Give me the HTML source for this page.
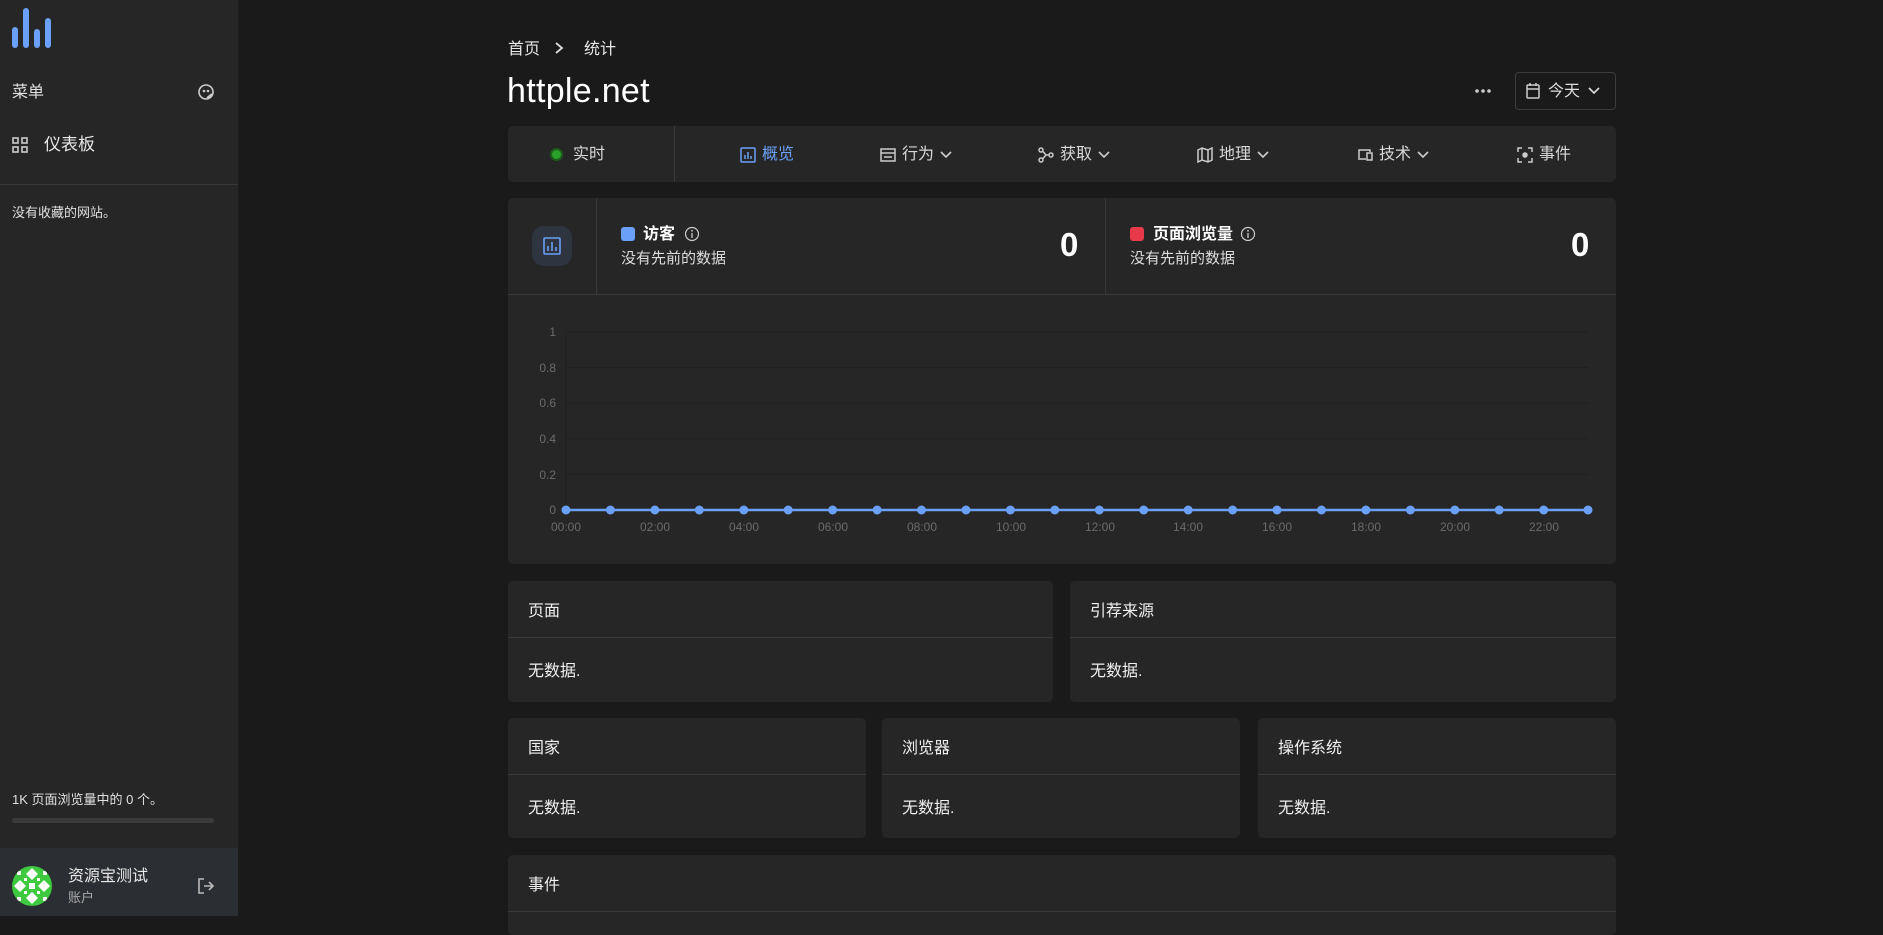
<!DOCTYPE html>
<html><head><meta charset="utf-8"><style>
*{box-sizing:border-box;margin:0;padding:0}
body{width:1883px;height:916px;overflow:hidden;background:#1a1a1a;color:#e8e8e8;font-family:"Liberation Sans","Noto Sans CJK SC",sans-serif;font-size:16px;position:relative;line-height:1.2}
.abs{position:absolute}
.side{left:0;top:0;width:238px;height:916px;background:#262626}
.card{background:#262626;border-radius:5px;position:absolute}
.ph{position:absolute;left:20px;top:21px;font-size:16px;color:#f0f0f0}
.pl{position:absolute;left:0;right:0;top:56px;border-top:1px solid #3a3a3a}
.pb{position:absolute;left:20px;top:81px;font-size:16px;color:#f0f0f0}
.tab{position:absolute;top:145px;font-size:16px;color:#d8d8d8;display:flex;align-items:center;gap:6px}
</style></head><body>
<div class="abs side">
  <svg class="abs" style="left:10px;top:6px" width="45" height="44"><g stroke="#6aa0f7" stroke-width="6" stroke-linecap="round"><line x1="5" y1="24" x2="5" y2="39"/><line x1="16" y1="5" x2="16" y2="39"/><line x1="27" y1="26" x2="27" y2="39"/><line x1="38" y1="15" x2="38" y2="39"/></g></svg>
  <div class="abs" style="left:12px;top:83px;font-size:16px;color:#e0e0e0">菜单</div>
  <svg class="abs" style="left:197px;top:83px" width="18" height="18" viewBox="0 0 18 18"><circle cx="9" cy="9" r="7" fill="none" stroke="#ccc" stroke-width="1.6"/><circle cx="7" cy="8" r="1.3" fill="#ccc"/><circle cx="11" cy="8" r="1.3" fill="#ccc"/><path d="M10 15 L15 11" stroke="#ccc" stroke-width="2"/></svg>
  <svg class="abs" style="left:12px;top:137px" width="16" height="16"><g fill="none" stroke="#ccc" stroke-width="1.6"><rect x="1" y="1" width="5" height="5"/><rect x="10" y="1" width="5" height="5"/><rect x="1" y="10" width="5" height="5"/><rect x="10" y="10" width="5" height="5"/></g></svg>
  <div class="abs" style="left:44px;top:135px;font-size:17px;color:#e8e8e8">仪表板</div>
  <div class="abs" style="left:0;top:184px;width:238px;border-top:1px solid #383838"></div>
  <div class="abs" style="left:12px;top:205px;font-size:13px;color:#e0e0e0">没有收藏的网站。</div>
  <div class="abs" style="left:12px;top:792px;font-size:13px;color:#e0e0e0">1K 页面浏览量中的 0 个。</div>
  <div class="abs" style="left:12px;top:818px;width:202px;height:5px;border-radius:3px;background:#3a3a3a"></div>
  <div class="abs" style="left:0;top:848px;width:238px;height:68px;background:#2b2e33"></div>
  <svg class="abs" style="left:12px;top:866px" width="40" height="40" viewBox="0 0 40 40"><defs><clipPath id="c"><circle cx="20" cy="20" r="20"/></clipPath></defs><g clip-path="url(#c)"><rect width="40" height="40" fill="#3ec93e"/><g fill="#fff"><path d="M20 2 L26 8 L20 14 L14 8Z"/><path d="M20 26 L26 32 L20 38 L14 32Z"/><path d="M2 20 L8 14 L14 20 L8 26Z"/><path d="M26 20 L32 14 L38 20 L32 26Z"/><rect x="17" y="17" width="6" height="6"/><rect x="5" y="5" width="4" height="4"/><rect x="31" y="5" width="4" height="4"/><rect x="5" y="31" width="4" height="4"/><rect x="31" y="31" width="4" height="4"/><rect x="12" y="12" width="3" height="3"/><rect x="25" y="12" width="3" height="3"/><rect x="12" y="25" width="3" height="3"/><rect x="25" y="25" width="3" height="3"/></g></g></svg>
  <div class="abs" style="left:68px;top:867px;font-size:16px;color:#e8e8e8">资源宝测试</div>
  <div class="abs" style="left:68px;top:890px;font-size:13px;color:#aaa">账户</div>
  <svg class="abs" style="left:197px;top:877px" width="18" height="18" viewBox="0 0 18 18" fill="none" stroke="#bbb" stroke-width="1.6"><path d="M7 2H2V16H7"/><path d="M7 9H16M12 5L16 9L12 13"/></svg>
</div>

<div class="abs" style="left:508px;top:40px;font-size:16px;color:#e8e8e8">首页</div>
<svg class="abs" style="left:553px;top:41px" width="12" height="14"><path d="M3 2L9 7L3 12" fill="none" stroke="#ddd" stroke-width="1.8"/></svg>
<div class="abs" style="left:584px;top:40px;font-size:16px;color:#e8e8e8">统计</div>
<div class="abs" style="left:507px;top:71px;font-size:34px;color:#fff;font-weight:500;letter-spacing:0.3px">httple.net</div>
<svg class="abs" style="left:1474px;top:88px" width="18" height="6"><circle cx="3" cy="3" r="1.8" fill="#ccc"/><circle cx="9" cy="3" r="1.8" fill="#ccc"/><circle cx="15" cy="3" r="1.8" fill="#ccc"/></svg>
<div class="abs" style="left:1515px;top:72px;width:101px;height:38px;border:1px solid #3c3c3c;border-radius:4px"></div>
<svg class="abs" style="left:1526px;top:83px" width="14" height="16" viewBox="0 0 14 16" fill="none" stroke="#ccc" stroke-width="1.5"><rect x="1" y="2" width="12" height="13" rx="1"/><path d="M1 6H13M4 0V3M10 0V3"/></svg>
<div class="abs" style="left:1548px;top:82px;font-size:16px;color:#ddd">今天</div>
<svg class="abs" style="left:1588px;top:86px" width="12" height="10"><path d="M1 2L6 7L11 2" fill="none" stroke="#ddd" stroke-width="1.6"/></svg>

<div class="card" style="left:508px;top:126px;width:1108px;height:56px"></div>
<div class="abs" style="left:674px;top:126px;height:56px;border-left:1px solid #3a3a3a"></div>
<div class="abs" style="left:550px;top:148px;width:13px;height:13px;border-radius:50%;background:#2ba02b;border:2px solid #1b5d1b"></div>
<div class="tab" style="left:573px">实时</div>
<div class="tab" style="left:740px;color:#6aa0f7"><svg width="16" height="16" viewBox="0 0 16 16" fill="none" stroke="#6aa0f7" stroke-width="1.5"><rect x="1" y="1" width="14" height="14" rx="1"/><path d="M5 12V8M8 12V5M11 12V9"/></svg>概览</div>
<div class="tab" style="left:880px"><svg width="16" height="14" viewBox="0 0 16 14" fill="none" stroke="#ccc" stroke-width="1.5"><rect x="1" y="1" width="14" height="12"/><path d="M1 5H15M4 9H12"/></svg>行为<svg width="12" height="10"><path d="M1 2L6 7L11 2" fill="none" stroke="#ccc" stroke-width="1.6"/></svg></div>
<div class="tab" style="left:1038px"><svg width="16" height="16" viewBox="0 0 16 16" fill="none" stroke="#ccc" stroke-width="1.5"><circle cx="3" cy="3" r="2"/><circle cx="3" cy="13" r="2"/><circle cx="13" cy="8" r="2"/><path d="M4.5 4L8 8H11M4.5 12L8 8"/></svg>获取<svg width="12" height="10"><path d="M1 2L6 7L11 2" fill="none" stroke="#ccc" stroke-width="1.6"/></svg></div>
<div class="tab" style="left:1197px"><svg width="16" height="16" viewBox="0 0 16 16" fill="none" stroke="#ccc" stroke-width="1.5"><path d="M1 3L5 1L11 3L15 1V13L11 15L5 13L1 15Z M5 1V13M11 3V15"/></svg>地理<svg width="12" height="10"><path d="M1 2L6 7L11 2" fill="none" stroke="#ccc" stroke-width="1.6"/></svg></div>
<div class="tab" style="left:1357px"><svg width="16" height="14" viewBox="0 0 16 14" fill="none" stroke="#ccc" stroke-width="1.5"><path d="M2 10V2H13V4M1 11H9"/><rect x="10" y="5" width="5" height="7"/></svg>技术<svg width="12" height="10"><path d="M1 2L6 7L11 2" fill="none" stroke="#ccc" stroke-width="1.6"/></svg></div>
<div class="tab" style="left:1517px"><svg width="16" height="16" viewBox="0 0 16 16" fill="none" stroke="#ccc" stroke-width="1.5"><path d="M1 5V1H5M11 1H15V5M15 11V15H11M5 15H1V11"/><circle cx="8" cy="8" r="2" fill="#ccc"/></svg>事件</div>

<div class="card" style="left:508px;top:198px;width:1108px;height:366px"></div>
<div class="abs" style="left:596px;top:198px;height:96px;border-left:1px solid #383838"></div>
<div class="abs" style="left:1105px;top:198px;height:96px;border-left:1px solid #383838"></div>
<div class="abs" style="left:508px;top:294px;width:1108px;border-top:1px solid #383838"></div>
<div class="abs" style="left:532px;top:226px;width:40px;height:40px;border-radius:12px;background:#2f3540"></div>
<svg class="abs" style="left:543px;top:237px" width="18" height="18" viewBox="0 0 18 18" fill="none" stroke="#6aa0f7" stroke-width="1.6"><rect x="1" y="1" width="16" height="16" rx="1"/><path d="M5 14V9M9 14V5M13 14V10"/></svg>
<div class="abs" style="left:621px;top:227px;width:14px;height:14px;border-radius:3px;background:#6aa0f7"></div>
<div class="abs" style="left:643px;top:225px;font-size:16px;font-weight:bold;color:#fff">访客</div>
<svg class="abs" style="left:684px;top:226px" width="16" height="16"><circle cx="8" cy="8" r="6.5" fill="none" stroke="#ccc" stroke-width="1.2"/><path d="M8 7V12" stroke="#ccc" stroke-width="1.3"/><circle cx="8" cy="4.8" r="0.9" fill="#ccc"/></svg>
<div class="abs" style="left:621px;top:250px;font-size:15px;color:#ddd">没有先前的数据</div>
<div class="abs" style="left:1060px;top:225px;font-size:33px;font-weight:bold;color:#fff">0</div>
<div class="abs" style="left:1130px;top:227px;width:14px;height:14px;border-radius:3px;background:#e8394a"></div>
<div class="abs" style="left:1153px;top:225px;font-size:16px;font-weight:bold;color:#fff">页面浏览量</div>
<svg class="abs" style="left:1240px;top:226px" width="16" height="16"><circle cx="8" cy="8" r="6.5" fill="none" stroke="#ccc" stroke-width="1.2"/><path d="M8 7V12" stroke="#ccc" stroke-width="1.3"/><circle cx="8" cy="4.8" r="0.9" fill="#ccc"/></svg>
<div class="abs" style="left:1130px;top:250px;font-size:15px;color:#ddd">没有先前的数据</div>
<div class="abs" style="left:1571px;top:225px;font-size:33px;font-weight:bold;color:#fff">0</div>

<svg class="abs" style="left:508px;top:310px" width="1108" height="240" font-family="Liberation Sans, sans-serif" font-size="12" fill="#6b6b6b">
<g stroke="#202020" stroke-width="1">
<line x1="58" y1="22" x2="1080" y2="22"/><line x1="58" y1="57.6" x2="1080" y2="57.6"/><line x1="58" y1="93.2" x2="1080" y2="93.2"/><line x1="58" y1="128.8" x2="1080" y2="128.8"/><line x1="58" y1="164.4" x2="1080" y2="164.4"/><line x1="58" y1="22" x2="58" y2="200"/></g>
<g text-anchor="end"><text x="48" y="26">1</text><text x="48" y="62">0.8</text><text x="48" y="97">0.6</text><text x="48" y="133">0.4</text><text x="48" y="169">0.2</text><text x="48" y="204">0</text></g>
<g text-anchor="middle"><text x="58" y="221">00:00</text><text x="147" y="221">02:00</text><text x="236" y="221">04:00</text><text x="325" y="221">06:00</text><text x="414" y="221">08:00</text><text x="503" y="221">10:00</text><text x="592" y="221">12:00</text><text x="680" y="221">14:00</text><text x="769" y="221">16:00</text><text x="858" y="221">18:00</text><text x="947" y="221">20:00</text><text x="1036" y="221">22:00</text></g>
<line x1="58" y1="200" x2="1080" y2="200" stroke="#6aa0f7" stroke-width="2.5"/>
<g fill="#6aa0f7">
<circle cx="58" cy="200" r="4.5"/><circle cx="102.4" cy="200" r="4.5"/><circle cx="146.9" cy="200" r="4.5"/><circle cx="191.3" cy="200" r="4.5"/><circle cx="235.8" cy="200" r="4.5"/><circle cx="280.2" cy="200" r="4.5"/><circle cx="324.6" cy="200" r="4.5"/><circle cx="369.1" cy="200" r="4.5"/><circle cx="413.5" cy="200" r="4.5"/><circle cx="458" cy="200" r="4.5"/><circle cx="502.4" cy="200" r="4.5"/><circle cx="546.8" cy="200" r="4.5"/><circle cx="591.3" cy="200" r="4.5"/><circle cx="635.7" cy="200" r="4.5"/><circle cx="680.2" cy="200" r="4.5"/><circle cx="724.6" cy="200" r="4.5"/><circle cx="769" cy="200" r="4.5"/><circle cx="813.5" cy="200" r="4.5"/><circle cx="857.9" cy="200" r="4.5"/><circle cx="902.4" cy="200" r="4.5"/><circle cx="946.8" cy="200" r="4.5"/><circle cx="991.2" cy="200" r="4.5"/><circle cx="1035.7" cy="200" r="4.5"/><circle cx="1080" cy="200" r="4.5"/></g>
</svg>

<div class="card" style="left:508px;top:581px;width:545px;height:121px"><div class="ph">页面</div><div class="pl"></div><div class="pb">无数据.</div></div>
<div class="card" style="left:1070px;top:581px;width:546px;height:121px"><div class="ph">引荐来源</div><div class="pl"></div><div class="pb">无数据.</div></div>
<div class="card" style="left:508px;top:718px;width:358px;height:120px"><div class="ph">国家</div><div class="pl"></div><div class="pb">无数据.</div></div>
<div class="card" style="left:882px;top:718px;width:358px;height:120px"><div class="ph">浏览器</div><div class="pl"></div><div class="pb">无数据.</div></div>
<div class="card" style="left:1258px;top:718px;width:358px;height:120px"><div class="ph">操作系统</div><div class="pl"></div><div class="pb">无数据.</div></div>
<div class="card" style="left:508px;top:855px;width:1108px;height:80px"><div class="ph">事件</div><div class="pl"></div></div>
</body></html>
